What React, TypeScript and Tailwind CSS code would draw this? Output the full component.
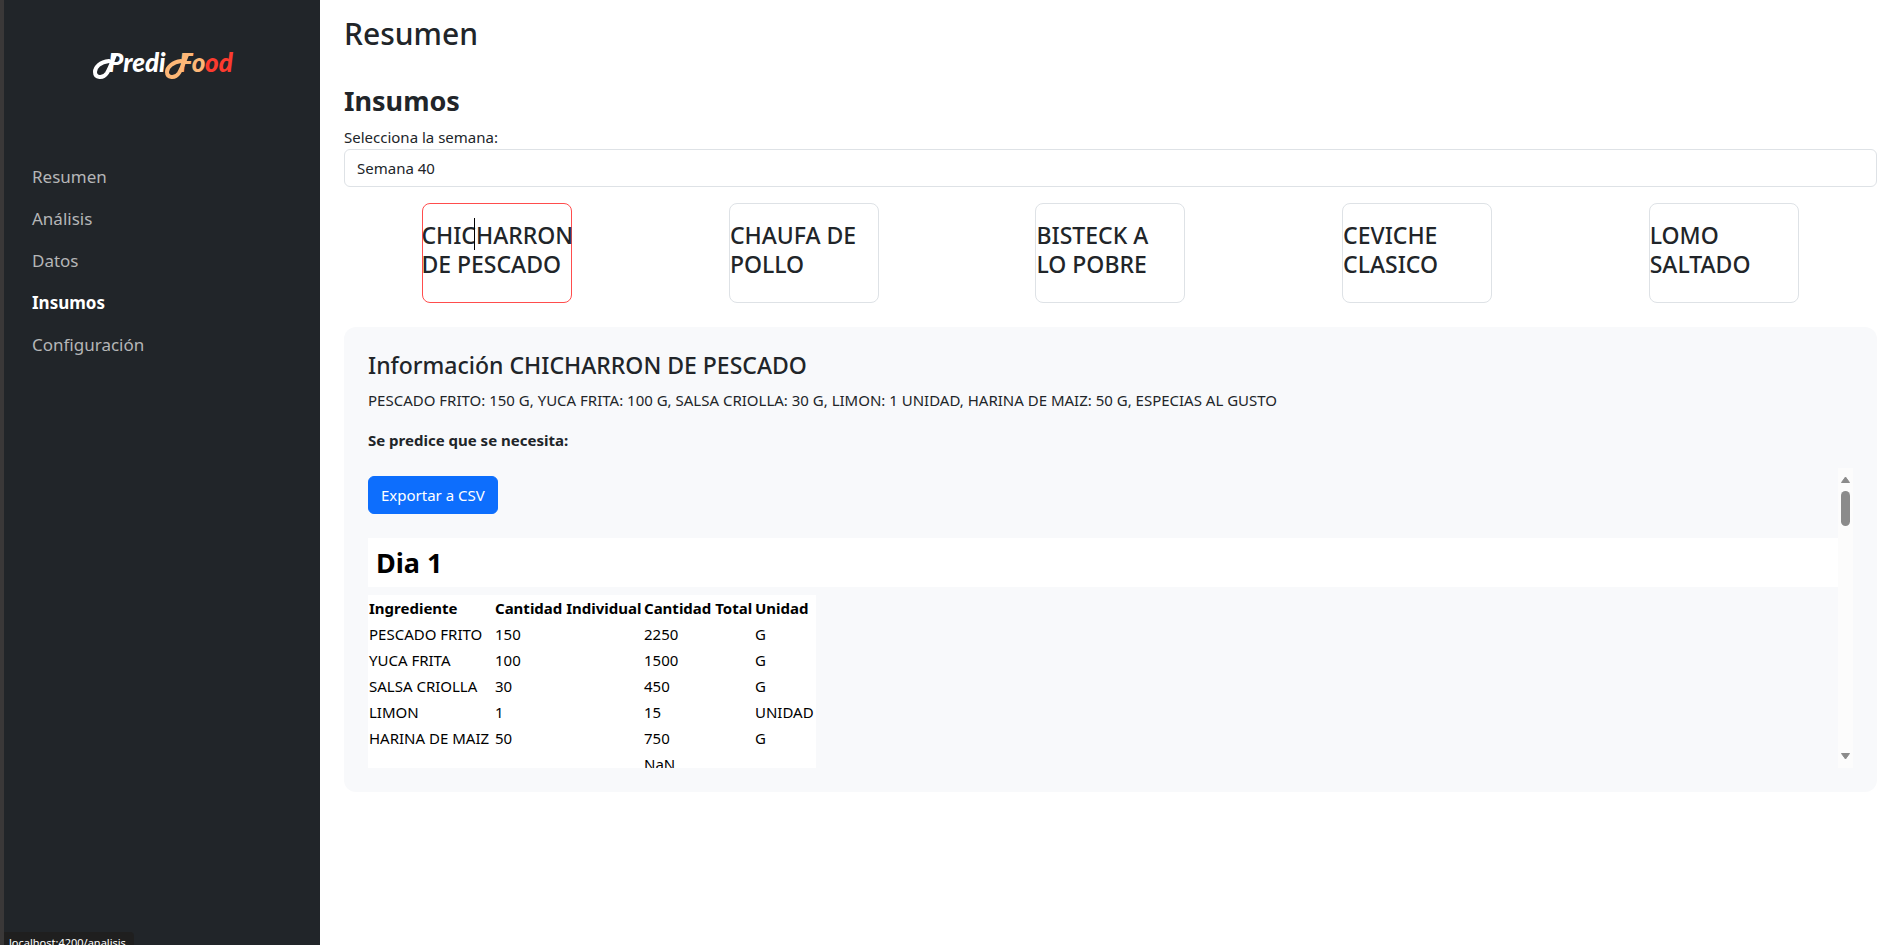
const NAV = ["Resumen", "Análisis", "Datos", "Insumos", "Configuración"];

const DISHES = [
  "CHICHARRON DE PESCADO",
  "CHAUFA DE POLLO",
  "BISTECK A LO POBRE",
  "CEVICHE CLASICO",
  "LOMO SALTADO",
];

const ROWS = [
  ["PESCADO FRITO", "150", "2250", "G"],
  ["YUCA FRITA", "100", "1500", "G"],
  ["SALSA CRIOLLA", "30", "450", "G"],
  ["LIMON", "1", "15", "UNIDAD"],
  ["HARINA DE MAIZ", "50", "750", "G"],
  ["", "", "NaN", ""],
];

function Logo() {
  return (
    <svg viewBox="-8 -10 160 54" className="h-[54px] w-40" role="img" aria-label="PrediFood">
      <g fill="none" strokeWidth="4" strokeLinecap="round" strokeLinejoin="round">
        <path d="M19 13C10 14 5 19 5 24C5 30 13 31 17 25C20 20 22 14 25 7" stroke="#ffffff" />
        <path d="M91 13C83 14 77 19 77 24C77 30 85 31 89 25C92 20 94 14 97 7" stroke="#fdb777" />
      </g>
      <g
        fontFamily="Lato, 'Liberation Sans', sans-serif"
        fontStyle="italic"
        fontWeight="900"
        fontSize="26"
      >
        <text x="18" y="24" fill="#ffffff">Predi</text>
        <text x="89" y="24" fill="#fdb777">Fo</text>
        <text x="115" y="24" fill="#fb3b2f">od</text>
      </g>
    </svg>
  );
}

function Sidebar() {
  return (
    <aside className="w-80 shrink-0 border-l-4 border-[#3a3838] bg-[#212529]">
      <div className="flex h-[132px] justify-center pt-[38px]">
        <Logo />
      </div>
      <nav className="flex flex-col pt-6 pl-7">
        {NAV.map((item) => (
          <a
            key={item}
            href="#"
            className={
              item === "Insumos"
                ? "py-2 text-[17px] leading-[26px] font-bold text-white"
                : "py-2 text-[17px] leading-[26px] text-[#b5b6b7]"
            }
          >
            {item}
          </a>
        ))}
      </nav>
    </aside>
  );
}

function DishCards() {
  return (
    <div className="mt-4 grid grid-cols-5">
      {DISHES.map((dish, i) => (
        <button
          key={dish}
          type="button"
          className={
            i === 0
              ? "relative flex h-[100px] w-[150px] justify-center justify-self-center rounded-lg border border-[#ff4d4d] pt-[17px] text-left"
              : "flex h-[100px] w-[150px] justify-self-center rounded-lg border border-[#dee2e6] pt-[17px] pr-3 text-left"
          }
        >
          <span className="text-[23px] leading-[29px] font-medium">{dish}</span>
          {i === 0 && <span className="absolute top-3.5 left-[51px] h-8 w-px bg-black" />}
        </button>
      ))}
    </div>
  );
}

function Scrollbar() {
  return (
    <div className="flex w-[15px] shrink-0 flex-col items-center bg-[#fcfcfc] py-2" aria-hidden="true">
      <svg viewBox="0 0 9 7" className="h-[7px] w-[9px]">
        <path d="M4.5 1 8.5 6.5H0.5Z" fill="#8b8b8b" stroke="#8b8b8b" strokeLinejoin="round" />
      </svg>
      <div className="mt-2 h-[35px] w-[9px] rounded-full bg-[#8b8b8b]" />
      <svg viewBox="0 0 9 7" className="mt-auto h-[7px] w-[9px]">
        <path d="M4.5 6 8.5 0.5H0.5Z" fill="#8b8b8b" stroke="#8b8b8b" strokeLinejoin="round" />
      </svg>
    </div>
  );
}

function DayTable() {
  return (
    <table className="mt-2 table-fixed border-collapse bg-white text-black">
      <thead>
        <tr>
          <th className="w-[126px] p-px text-left whitespace-nowrap">Ingrediente</th>
          <th className="w-[149px] p-px text-left whitespace-nowrap">Cantidad Individual</th>
          <th className="w-[111px] p-px text-left whitespace-nowrap">Cantidad Total</th>
          <th className="w-[62px] p-px text-left whitespace-nowrap">Unidad</th>
        </tr>
      </thead>
      <tbody>
        {ROWS.map((row, i) => (
          <tr key={i} className="h-[26px]">
            {row.map((cell, j) => (
              <td key={j} className="p-px whitespace-nowrap">{cell}</td>
            ))}
          </tr>
        ))}
      </tbody>
    </table>
  );
}

export default function App() {
  return (
    <div className="flex min-h-screen bg-white font-['Noto_Sans','Open_Sans',sans-serif] text-[15px] leading-6 text-[#212529]">
      <Sidebar />
      <main className="min-w-0 flex-1 pt-[14px] pr-[13px] pl-6">
        <h1 className="text-[30px] leading-10 font-medium">Resumen</h1>
        <h2 className="mt-[30px] text-[27px] leading-[34px] font-bold">Insumos</h2>
        <label htmlFor="week" className="mt-[7px] block">Selecciona la semana:</label>
        <select
          id="week"
          className="block h-[38px] w-full appearance-none rounded-md border border-[#dee2e6] bg-white px-3"
        >
          <option>Semana 40</option>
        </select>
        <DishCards />
        <section className="mt-6 rounded-xl bg-[#f8f9fb] p-6">
          <h3 className="text-[23px] leading-[29px] font-medium">Información CHICHARRON DE PESCADO</h3>
          <p className="mt-2">
            PESCADO FRITO: 150 G, YUCA FRITA: 100 G, SALSA CRIOLLA: 30 G, LIMON: 1 UNIDAD, HARINA DE MAIZ: 50 G, ESPECIAS AL GUSTO
          </p>
          <p className="mt-4 font-bold">Se predice que se necesita:</p>
          <div className="mt-4 flex h-[300px]">
            <div className="min-w-0 flex-1 overflow-y-auto pt-2 [scrollbar-width:none]">
              <button
                type="button"
                className="h-[38px] rounded-md border border-[#0d6efd] bg-[#0d6efd] px-3 text-white"
              >
                Exportar a CSV
              </button>
              <h4 className="mt-6 bg-white px-2 py-2 text-[27px] leading-[33px] font-bold text-black">Dia 1</h4>
              <DayTable />
            </div>
            <Scrollbar />
          </div>
        </section>
      </main>
      <div className="fixed bottom-0 left-1 h-[13px] w-[130px] overflow-hidden rounded-tr bg-[#1f1f1f] px-[5px] pt-px text-[11px] leading-5 text-white">
        localhost:4200/analisis
      </div>
    </div>
  );
}
